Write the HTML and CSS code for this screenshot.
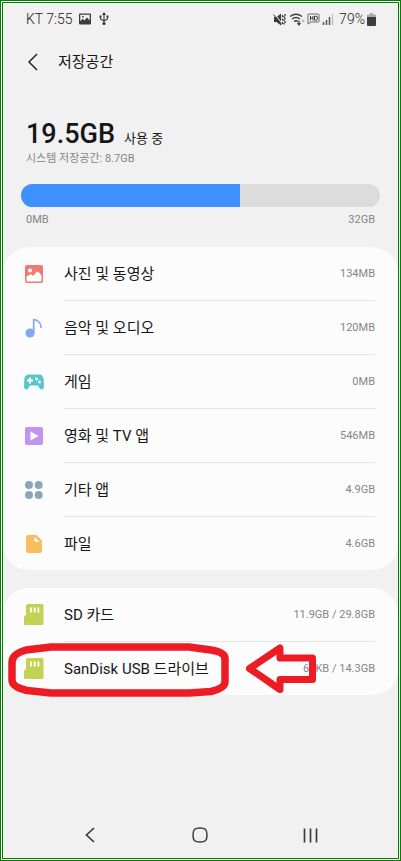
FILE: index.html
```html
<!DOCTYPE html>
<html lang="ko">
<head>
<meta charset="utf-8">
<meta name="viewport" content="width=device-width, initial-scale=1">
<title>저장공간</title>
<link rel="stylesheet" href="styles.css">
</head>
<body>
<div class="screen">
  <div class="status">
    <div class="status-group">
      <span>KT 7:55</span>
      <svg class="status-photo" width="12" height="12" viewBox="0 0 12 12"><path fill="#3c3c3c" fill-rule="evenodd" d="M1 0.5h10q1 0 1 1v9q0 1-1 1H1q-1 0-1-1v-9q0-1 1-1zM1.3 1.8v6.4l2.4-2.4 1.7 1.6 2.6-3 2.7 3V1.8zM3.2 3h1.5v1.5H3.2z"/></svg>
      <svg class="status-usb" width="10" height="14" viewBox="0 0 10 14" fill="none" stroke="#3c3c3c"><path d="M5 1v10M1.5 4.500v2.500L5 9l3.500-2V4.500" stroke-width="1.100"/><path fill="#3c3c3c" stroke="none" d="M5 0l2 3H3zM0.500 3.500h2v2h-2zM7.500 3.500h2v2h-2z"/><circle cx="5" cy="11.500" r="1.600" fill="#3c3c3c" stroke="none"/></svg>
    </div>
    <div class="status-group status-right">
      <svg width="14" height="13" viewBox="0 0 14 13"><path fill="#3c3c3c" d="M1 4h2.500L8 0.500v12L3.500 9H1z"/><path d="M1.500 0.500l7.500 10" stroke="#f1f1f1" stroke-width="1"/><path d="M0.500 1.500l8 10" stroke="#3c3c3c"/><path d="M9.500 2v2M9.500 5.500v2M9.500 9v2M12 1v2M11 3v1.500M12 4.500v2M11 6.500v1.500M12 8v2M11 10v1.500" fill="none" stroke="#3c3c3c" stroke-width="1.300"/></svg>
      <svg width="16" height="13" viewBox="0 0 16 13" fill="none" stroke="#3c3c3c" stroke-width="1.300"><path d="M1 3.500Q7 -1 13 3.500M3 6q4-3 8 0M5 8.500q2-1.500 4 0"/><path d="M10 7.500v4M8.500 10l1.500 2 1.500-2" stroke-width="1.200"/><path d="M12.500 8h3M14 6.500v3" stroke="#999" stroke-width="0.800"/></svg>
      <svg width="13" height="12" viewBox="0 0 13 12" fill="none" stroke="#666"><path d="M2 1h9q1 0 1 1v6q0 1-1 1H4l-3 2V2q0-1 1-1z" stroke-width="1"/><path d="M3.500 3v4.500M6 3v4.500M3.500 5H6M7.500 3.200h1.300q1.700 0 1.700 2t-1.700 2H7.500z" stroke="#3c3c3c" stroke-width="1"/></svg>
      <svg width="12" height="13" viewBox="0 0 12 13"><path d="M1.500 9v3M4.500 7v5M7.500 4v8" stroke="#555" stroke-width="1.500"/><path d="M10.500 1v11" stroke="#bbb" stroke-width="1.200"/></svg>
      <span class="battery-text">79%</span>
      <svg width="9" height="13" viewBox="0 0 9 13"><path fill="#aaa" d="M3 0h3v1.500h2q1 0 1 1V5H0V2.500q0-1 1-1h2z"/><path fill="#3c3c3c" d="M0 4h9v8q0 1-1 1H1q-1 0-1-1z"/></svg>
    </div>
  </div>

  <header class="header">
    <button class="back" type="button" aria-label="뒤로"><svg width="10" height="18" viewBox="0 0 10 18"><path d="M9 1L1 9l8 8" fill="none" stroke="#222" stroke-width="1.500"/></svg></button>
    <h1>저장공간</h1>
  </header>

  <main>
    <section class="summary">
      <p class="used"><strong>19.5GB</strong> <span>사용 중</span></p>
      <p class="caption">시스템 저장공간: 8.7GB</p>
      <div class="bar"><div class="bar-fill" style="width:61%"></div></div>
      <div class="scale"><span>0MB</span><span>32GB</span></div>
    </section>

    <ul class="card">
      <li><a class="row" href="#">
        <svg class="icon" viewBox="0 0 20 20"><rect x="1" y="1" width="18" height="18" rx="2" fill="#ed7c70"/><circle cx="6" cy="6.500" r="2" fill="#fff"/><path fill="#fff" d="M2.500 12.500L6 10.500q1-.5 2 .5l1 1 3.500-4q1-1 2 0l3 3.500v5q0 1-1 1h-13q-1 0-1-1z"/></svg>
        <span class="row-body"><span>사진 및 동영상</span><span class="value">134MB</span></span></a></li>
      <li><a class="row" href="#">
        <svg class="icon" viewBox="0 0 20 20"><circle cx="6" cy="15" r="4.500" fill="#83a8f0"/><path d="M9.700 15V1.700C14 2 17 5 17 9.500" fill="none" stroke="#83a8f0" stroke-width="1.700" stroke-linecap="round" stroke-linejoin="round"/></svg>
        <span class="row-body"><span>음악 및 오디오</span><span class="value">120MB</span></span></a></li>
      <li><a class="row" href="#">
        <svg class="icon" viewBox="0 0 20 20"><path fill="#58c6cb" d="M5 2.500h10c3 0 4.500 2 4.700 5l.3 7c0 3.500-3 4-4.500 1.500l-1.500-2.500H6L4.500 16C3 18.500 0 18 0 14.500l.3-7c.2-3 1.700-5 4.700-5z"/><path d="M6 5.500v6M3 8.500h6" stroke="#fff" stroke-width="1.800"/><circle cx="12.500" cy="7" r="1.400" fill="#fff"/><circle cx="15.500" cy="10" r="1.400" fill="#fff"/></svg>
        <span class="row-body"><span>게임</span><span class="value">0MB</span></span></a></li>
      <li><a class="row" href="#">
        <svg class="icon" viewBox="0 0 20 20"><rect x="1" y="1" width="18" height="18" rx="2" fill="#c394ee"/><path fill="#fff" d="M6.500 5.500l8 4.500-8 4.500z"/></svg>
        <span class="row-body"><span>영화 및 TV 앱</span><span class="value">546MB</span></span></a></li>
      <li><a class="row" href="#">
        <svg class="icon" viewBox="0 0 20 20" fill="#8ca6b8"><circle cx="5" cy="5" r="4"/><circle cx="14.700" cy="5" r="4"/><circle cx="5" cy="15" r="4"/><circle cx="14.700" cy="15" r="4"/></svg>
        <span class="row-body"><span>기타 앱</span><span class="value">4.9GB</span></span></a></li>
      <li><a class="row" href="#">
        <svg class="icon" viewBox="0 0 20 20"><path fill="#f7be60" d="M4 1h8.500L18 6.500V17q0 2-2 2H4q-2 0-2-2V3q0-2 2-2z"/><path fill="#fff" d="M10.500 3l5 4.800h-4q-1 0-1-1z"/></svg>
        <span class="row-body"><span>파일</span><span class="value">4.6GB</span></span></a></li>
    </ul>

    <div class="external">
      <ul class="card">
        <li><a class="row" href="#">
          <svg class="icon icon-sd" viewBox="0 0 20 22"><path fill="#c1d255" d="M4 0h14q1.500 0 1.500 1.500v18q0 1.500-1.500 1.500H1.500Q0 21 0 19.500V13l2-2.500V2q0-2 2-2z"/><path d="M7 3.500v5M10.700 3.500v5M14.400 3.500v5" stroke="#fff" stroke-width="1.800"/></svg>
          <span class="row-body"><span>SD 카드</span><span class="value">11.9GB / 29.8GB</span></span></a></li>
        <li><a class="row" href="#">
          <svg class="icon icon-sd" viewBox="0 0 20 22"><path fill="#c1d255" d="M4 0h14q1.500 0 1.500 1.500v18q0 1.500-1.500 1.500H1.500Q0 21 0 19.500V13l2-2.500V2q0-2 2-2z"/><path d="M7 3.500v5M10.700 3.500v5M14.400 3.500v5" stroke="#fff" stroke-width="1.800"/></svg>
          <span class="row-body"><span>SanDisk USB 드라이브</span><span class="value">64KB / 14.3GB</span></span></a></li>
      </ul>
      <svg class="mark-ring" width="222" height="56" viewBox="0 0 222 56"><path d="M43 5H181L203 8Q217 10 217 17V40Q217 46 203 49.500L181 51H43L19 48.500Q4 45 4 38V20Q4 12 18 8Z" fill="none" stroke="#ed1c24" stroke-width="7.500" stroke-linejoin="round"/></svg>
      <svg class="mark-arrow" width="72" height="50" viewBox="0 0 72 50"><path d="M4.500 24.500L35 4V14H67.500V35.500H35V45.500Z" fill="none" stroke="#ed1c24" stroke-width="7" stroke-linejoin="round"/></svg>
    </div>
  </main>

  <nav class="navbar">
    <button type="button" aria-label="뒤로"><svg width="10" height="16" viewBox="0 0 10 16"><path d="M9 1L1.500 8 9 15" fill="none" stroke="#3c3c3c" stroke-width="1.700"/></svg></button>
    <button type="button" aria-label="홈"><svg width="16" height="16" viewBox="0 0 16 16"><path d="M8 1c5.500 0 7 1.500 7 7s-1.500 7-7 7-7-1.500-7-7 1.500-7 7-7z" fill="none" stroke="#3c3c3c" stroke-width="1.500"/></svg></button>
    <button type="button" aria-label="최근 앱"><svg width="15" height="15" viewBox="0 0 15 15"><path d="M1.500 .5v14M7.500 .5v14M13.500 .5v14" stroke="#3c3c3c" stroke-width="1.700"/></svg></button>
  </nav>
</div>
</body>
</html>
```
FILE: styles.css
```css
* {
  box-sizing: border-box;
}

body {
  margin: 0;
  color: #161616;
  background: #fff;
  font-family: Roboto, "Noto Sans CJK KR", sans-serif;
}

h1, p, ul {
  margin: 0;
  padding: 0;
}

ul {
  list-style: none;
}

button {
  padding: 0;
  border: 0;
  background: none;
}

svg {
  display: block;
  flex-shrink: 0;
}

.screen {
  display: flex;
  flex-direction: column;
  min-height: 100vh;
  border: 3px double #008000;
  background: #f1f1f1 padding-box;
}

.status {
  display: flex;
  align-items: center;
  justify-content: space-between;
  height: 32px;
  padding: 0 22px 0 23px;
  color: #222;
  font-size: 14px;
  font-weight: 300;
  line-height: 16px;
}

.status-group {
  display: flex;
  align-items: center;
  gap: 6px;
}

.status-usb {
  margin-left: 2px;
}

.status-right {
  gap: 2px;
}

.battery-text {
  margin-left: 3px;
}

.header {
  display: flex;
  align-items: center;
  gap: 20px;
  height: 54px;
  padding: 0 25px;
}

.header h1 {
  font-size: 15px;
  font-weight: 400;
  line-height: 24px;
}

.summary {
  padding: 29px 18px 18px;
}

.used,
.caption,
.scale {
  padding: 0 5px;
}

.used {
  display: flex;
  align-items: baseline;
  gap: 9px;
  height: 32px;
  line-height: 32px;
  font-size: 13px;
}

.used strong {
  font-size: 27px;
  font-weight: 500;
}

.caption,
.scale,
.value {
  color: #858585;
  font-size: 11px;
  line-height: 18px;
}

.bar {
  height: 23px;
  margin: 16px 0 4px;
  overflow: hidden;
  border-radius: 12px;
  background: #dcdcdc;
}

.bar-fill {
  height: 100%;
  background: #3e91ff;
}

.scale {
  display: flex;
  justify-content: space-between;
}

.card {
  border-radius: 26px;
  background: #fcfcfc;
}

.row {
  display: flex;
  align-items: center;
  gap: 20px;
  padding: 0 23px 0 21px;
  color: inherit;
  text-decoration: none;
}

.icon {
  width: 20px;
  height: 20px;
}

.icon-sd {
  height: 22px;
}

.row-body {
  display: flex;
  flex: 1;
  align-items: center;
  justify-content: space-between;
  height: 54px;
  border-bottom: 1px solid #e4e4e4;
  font-size: 15px;
  line-height: 24px;
}

.card li:last-child .row-body {
  height: 53px;
  border-bottom: 0;
}

.external {
  position: relative;
  margin-top: 18px;
}

.mark-ring {
  position: absolute;
  top: 54px;
  left: 5px;
}

.mark-arrow {
  position: absolute;
  top: 56px;
  right: 81px;
}

.navbar {
  display: grid;
  grid-template-columns: repeat(3, 1fr);
  height: 46px;
  margin-top: auto;
  padding: 0 32px;
}

.navbar button {
  display: grid;
  place-items: center;
}
```
